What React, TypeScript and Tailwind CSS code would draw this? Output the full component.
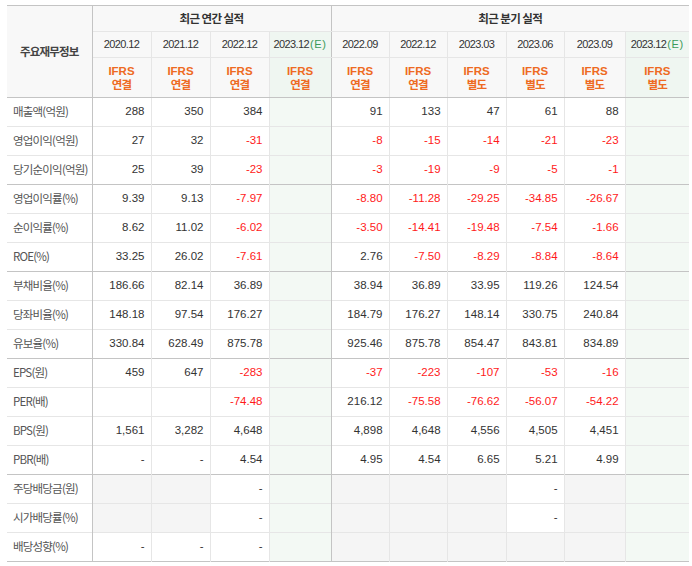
import React from "react";

type Cell = string | null; // null = grey empty

const rows: { label: string; a: Cell[]; q: Cell[]; sep?: boolean }[] = [
  { label: "매출액(억원)", a: ["288", "350", "384"], q: ["91", "133", "47", "61", "88"] },
  { label: "영업이익(억원)", a: ["27", "32", "-31"], q: ["-8", "-15", "-14", "-21", "-23"] },
  { label: "당기순이익(억원)", a: ["25", "39", "-23"], q: ["-3", "-19", "-9", "-5", "-1"], sep: true },
  { label: "영업이익률(%)", a: ["9.39", "9.13", "-7.97"], q: ["-8.80", "-11.28", "-29.25", "-34.85", "-26.67"] },
  { label: "순이익률(%)", a: ["8.62", "11.02", "-6.02"], q: ["-3.50", "-14.41", "-19.48", "-7.54", "-1.66"] },
  { label: "ROE(%)", a: ["33.25", "26.02", "-7.61"], q: ["2.76", "-7.50", "-8.29", "-8.84", "-8.64"], sep: true },
  { label: "부채비율(%)", a: ["186.66", "82.14", "36.89"], q: ["38.94", "36.89", "33.95", "119.26", "124.54"] },
  { label: "당좌비율(%)", a: ["148.18", "97.54", "176.27"], q: ["184.79", "176.27", "148.14", "330.75", "240.84"] },
  { label: "유보율(%)", a: ["330.84", "628.49", "875.78"], q: ["925.46", "875.78", "854.47", "843.81", "834.89"], sep: true },
  { label: "EPS(원)", a: ["459", "647", "-283"], q: ["-37", "-223", "-107", "-53", "-16"] },
  { label: "PER(배)", a: ["", "", "-74.48"], q: ["216.12", "-75.58", "-76.62", "-56.07", "-54.22"] },
  { label: "BPS(원)", a: ["1,561", "3,282", "4,648"], q: ["4,898", "4,648", "4,556", "4,505", "4,451"] },
  { label: "PBR(배)", a: ["-", "-", "4.54"], q: ["4.95", "4.54", "6.65", "5.21", "4.99"], sep: true },
  { label: "주당배당금(원)", a: [null, null, "-"], q: [null, null, null, "-", null] },
  { label: "시가배당률(%)", a: [null, null, "-"], q: [null, null, null, "-", null] },
  { label: "배당성향(%)", a: ["-", "-", "-"], q: [null, null, null, null, null] },
];

const KR = "font-['Noto_Sans_CJK_KR',sans-serif]";
const NUM = "font-['Liberation_Sans','Noto_Sans_CJK_KR',sans-serif]";

function ValueCell({ v }: { v: Cell }) {
  const neg = v !== null && v.startsWith("-") && v.length > 1;
  return (
    <td
      className={`border-r border-[#e6e6e6] pr-[6px] text-right align-middle text-[11.5px] ${NUM} ${
        v === null ? "bg-[#f5f5f5]" : "bg-white"
      } ${neg ? "text-[#ff1a1a]" : "text-[#333]"}`}
    >
      {v ?? ""}
    </td>
  );
}

const annual = ["2020.12", "2021.12", "2022.12"];
const quarter = ["2022.09", "2022.12", "2023.03", "2023.06", "2023.09"];
const qType = ["연결", "연결", "별도", "별도", "별도"];

export default function App() {
  return (
    <div className="w-[692px] h-[566px] bg-white pl-[7px] pt-[5px]">
      <table className="w-[681px] table-fixed border-collapse">
        <colgroup>
          <col className="w-[85px]" />
          <col className="w-[59px]" />
          <col className="w-[59px]" />
          <col className="w-[59px]" />
          <col className="w-[62px]" />
          <col className="w-[58px]" />
          <col className="w-[58px]" />
          <col className="w-[59px]" />
          <col className="w-[58px]" />
          <col className="w-[61px]" />
          <col className="w-[64px]" />
        </colgroup>
        <thead>
          <tr className="h-[26px] border-t border-[#c4c4c4]">
            <th
              rowSpan={3}
              className={`bg-[#f8f8f8] border-r border-b border-[#c4c4c4] text-[11.5px] font-bold text-[#444] tracking-[-0.8px] ${KR}`}
            >
              주요재무정보
            </th>
            <th
              colSpan={4}
              className={`bg-[#f8f8f8] border-r border-b border-r-[#c4c4c4] border-b-[#e6e6e6] text-[11.5px] font-bold text-[#333] tracking-[-0.6px] ${KR}`}
            >
              최근 연간 실적
            </th>
            <th
              colSpan={6}
              className={`bg-[#f8f8f8] border-b border-[#e6e6e6] text-[11.5px] font-bold text-[#333] tracking-[-0.6px] ${KR}`}
            >
              최근 분기 실적
            </th>
          </tr>
          <tr className="h-[26px]">
            {annual.map((d) => (
              <th
                key={d}
                className={`bg-[#f8f8f8] border-r border-b border-[#e6e6e6] font-normal text-[11px] text-[#333] tracking-[-0.6px] ${NUM}`}
              >
                {d}
              </th>
            ))}
            <th
              className={`bg-[#eff6f1] border-r border-b border-r-[#c4c4c4] border-b-[#e6e6e6] font-normal text-[11px] text-[#333] tracking-[-0.6px] whitespace-nowrap ${NUM}`}
            >
              2023.12<span className="text-[#3b9a5a] tracking-[0.6px] pl-[1px]">(E)</span>
            </th>
            {quarter.map((d) => (
              <th
                key={d}
                className={`bg-[#f8f8f8] border-r border-b border-[#e6e6e6] font-normal text-[11px] text-[#333] tracking-[-0.6px] ${NUM}`}
              >
                {d}
              </th>
            ))}
            <th
              className={`bg-[#eff6f1] border-b border-[#e6e6e6] font-normal text-[11px] text-[#333] tracking-[-0.6px] whitespace-nowrap ${NUM}`}
            >
              2023.12<span className="text-[#3b9a5a] tracking-[0.6px] pl-[1px]">(E)</span>
            </th>
          </tr>
          <tr className="h-[40px] border-b border-[#c4c4c4]">
            {["연결", "연결", "연결"].map((t, i) => (
              <th
                key={i}
                className={`bg-[#f8f8f8] border-r border-[#e6e6e6] border-b border-b-[#c4c4c4] text-[11.5px] leading-[14px] font-bold text-[#ee6a22] ${NUM}`}
              >
                IFRS
                <br />
                <span className="tracking-[-0.8px]">{t}</span>
              </th>
            ))}
            <th
              className={`bg-[#eff6f1] border-r border-r-[#c4c4c4] border-b border-b-[#c4c4c4] text-[11.5px] leading-[14px] font-bold text-[#ee6a22] ${NUM}`}
            >
              IFRS
              <br />
              <span className="tracking-[-0.8px]">연결</span>
            </th>
            {qType.map((t, i) => (
              <th
                key={i}
                className={`bg-[#f8f8f8] border-r border-[#e6e6e6] border-b border-b-[#c4c4c4] text-[11.5px] leading-[14px] font-bold text-[#ee6a22] ${NUM}`}
              >
                IFRS
                <br />
                <span className="tracking-[-0.8px]">{t}</span>
              </th>
            ))}
            <th
              className={`bg-[#eff6f1] border-b border-b-[#c4c4c4] text-[11.5px] leading-[14px] font-bold text-[#ee6a22] ${NUM}`}
            >
              IFRS
              <br />
              <span className="tracking-[-0.8px]">별도</span>
            </th>
          </tr>
        </thead>
        <tbody>
          {rows.map((r, idx) => {
            const last = idx === rows.length - 1;
            return (
              <tr
                key={r.label}
                className={`h-[29px] border-b ${
                  r.sep || last ? "border-[#c4c4c4]" : "border-[#e6e6e6]"
                }`}
              >
                <td
                  className={`bg-white border-r border-r-[#c4c4c4] pl-[6px] text-left align-middle text-[11.5px] text-[#555] tracking-[-0.8px] whitespace-nowrap ${KR}`}
                >
                  {r.label}
                </td>
                {r.a.map((v, i) => (
                  <ValueCell key={i} v={v} />
                ))}
                <td className="bg-[#f3f9f4] border-r border-r-[#c4c4c4]"></td>
                {r.q.map((v, i) => (
                  <ValueCell key={i} v={v} />
                ))}
                <td className="bg-[#f3f9f4]"></td>
              </tr>
            );
          })}
        </tbody>
      </table>
    </div>
  );
}
